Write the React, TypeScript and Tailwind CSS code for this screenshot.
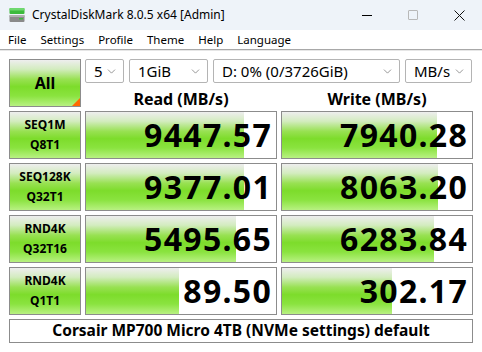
import { ChevronDown } from "lucide-react";

interface Row {
    l1: string;
    l2: string;
    read: string;
    readFill: number;
    write: string;
    writeFill: number;
}

const rows: Row[] = [
    { l1: "SEQ1M", l2: "Q8T1", read: "9447.57", readFill: 158, write: "7940.28", writeFill: 155 },
    { l1: "SEQ128K", l2: "Q32T1", read: "9377.01", readFill: 158, write: "8063.20", writeFill: 156 },
    { l1: "RND4K", l2: "Q32T16", read: "5495.65", readFill: 150, write: "6283.84", writeFill: 152 },
    { l1: "RND4K", l2: "Q1T1", read: "89.50", readFill: 93, write: "302.17", writeFill: 110 },
];

const green =
    "bg-[linear-gradient(180deg,#eeeeee_0%,#d3ecbf_20%,#98e152_42%,#7ddc2b_58%,#8ae33f_78%,#b8f182_100%)]";

function Combo({ text, w }: { text: string; w: string }) {
    return (
        <div className={`${w} h-[24px] flex items-center justify-between pl-[8px] pr-[5px] border border-[#b4b4b4] rounded-[2px] bg-white text-[15px] text-black`}>
            <span className="leading-none">{text}</span>
            <ChevronDown size={13} strokeWidth={1.2} className="text-[#606060]" />
        </div>
    );
}

function Result({ value, fill }: { value: string; fill: number }) {
    return (
        <div className="relative w-[192px] h-[48px] border border-[#8c8c8c] bg-white">
            <div className={`absolute left-0 top-0 bottom-0 ${green}`} style={{ width: fill }} />
            <div className="relative h-full flex items-center justify-end pr-[4px] text-[32px] font-bold leading-none tracking-[1.3px] text-black">
                {value}
            </div>
        </div>
    );
}

export default function App() {
    return (
        <div className="w-[482px] h-[352px] bg-white overflow-hidden font-['Noto_Sans',sans-serif] text-black">
            {/* title bar */}
            <div className="h-[30px] bg-[#eef3f9] flex items-center">
                <svg width="16" height="16" viewBox="0 0 16 16" className="ml-[9px]">
                    <rect x="0.5" y="1" width="15" height="6" rx="1" fill="#3cba3c" />
                    <rect x="0.5" y="1" width="15" height="2.5" rx="1" fill="#6fd86f" />
                    <rect x="0.5" y="8" width="15" height="7" rx="1" fill="#8a8a8a" />
                    <rect x="0.5" y="8" width="15" height="2" fill="#b0b0b0" />
                    <rect x="10" y="11" width="4" height="1.5" fill="#3cba3c" />
                </svg>
                <span className="ml-[7px] text-[12px] leading-none">CrystalDiskMark 8.0.5 x64 [Admin]</span>
                <div className="ml-auto flex items-center h-full">
                    <div className="w-[46px] h-full flex items-center justify-center">
                        <div className="w-[10px] h-px bg-black" />
                    </div>
                    <div className="w-[46px] h-full flex items-center justify-center">
                        <div className="w-[10px] h-[10px] border border-[#b8b8b8] rounded-[1px]" />
                    </div>
                    <div className="w-[46px] h-full flex items-center justify-center">
                        <svg width="11" height="11" viewBox="0 0 11 11">
                            <path d="M0.5 0.5 L10.5 10.5 M10.5 0.5 L0.5 10.5" stroke="#111" strokeWidth="1" />
                        </svg>
                    </div>
                </div>
            </div>

            {/* menu */}
            <div className="h-[19px] flex items-center pl-px text-[11.5px] leading-none">
                {["File", "Settings", "Profile", "Theme", "Help", "Language"].map((m) => (
                    <span key={m} className="px-[7px]">{m}</span>
                ))}
            </div>
            <div className="h-px bg-[#a8a8a8]" />
            <div className="h-px bg-[#e6e6e6]" />

            {/* body */}
            <div className="pl-[9px] pt-[8px] flex flex-col gap-[4px]">
                <div className="flex gap-[4px]">
                    <div className={`relative w-[72px] h-[48px] border border-[#8c8c8c] ${green} flex items-center justify-center text-[16px] font-bold`}>
                        All
                        <div className="absolute right-0 bottom-0 w-0 h-0 border-l-[8px] border-l-transparent border-b-[8px] border-b-[#ff6a00]" />
                    </div>
                    <div className="w-[388px] flex flex-col">
                        <div className="flex gap-[5px]">
                            <Combo text="5" w="w-[39px]" />
                            <Combo text="1GiB" w="w-[79px]" />
                            <Combo text="D: 0% (0/3726GiB)" w="w-[187px]" />
                            <Combo text="MB/s" w="w-[67px]" />
                        </div>
                        <div className="h-[24px] flex gap-[4px] text-[16px] font-bold leading-none">
                            <div className="w-[192px] flex items-end justify-center">Read (MB/s)</div>
                            <div className="w-[192px] flex items-end justify-center">Write (MB/s)</div>
                        </div>
                    </div>
                </div>

                {rows.map((r, i) => (
                    <div key={i} className="flex gap-[4px]">
                        <div className={`w-[72px] h-[48px] border border-[#8c8c8c] ${green} flex flex-col items-center justify-center text-[12px] font-bold leading-[20px]`}>
                            <span>{r.l1}</span>
                            <span>{r.l2}</span>
                        </div>
                        <Result value={r.read} fill={r.readFill} />
                        <Result value={r.write} fill={r.writeFill} />
                    </div>
                ))}

                <div className="w-[464px] h-[24px] border border-[#8c8c8c] flex items-center justify-center text-[15.5px] font-bold leading-none">
                    Corsair MP700 Micro 4TB (NVMe settings) default
                </div>
            </div>
        </div>
    );
}
